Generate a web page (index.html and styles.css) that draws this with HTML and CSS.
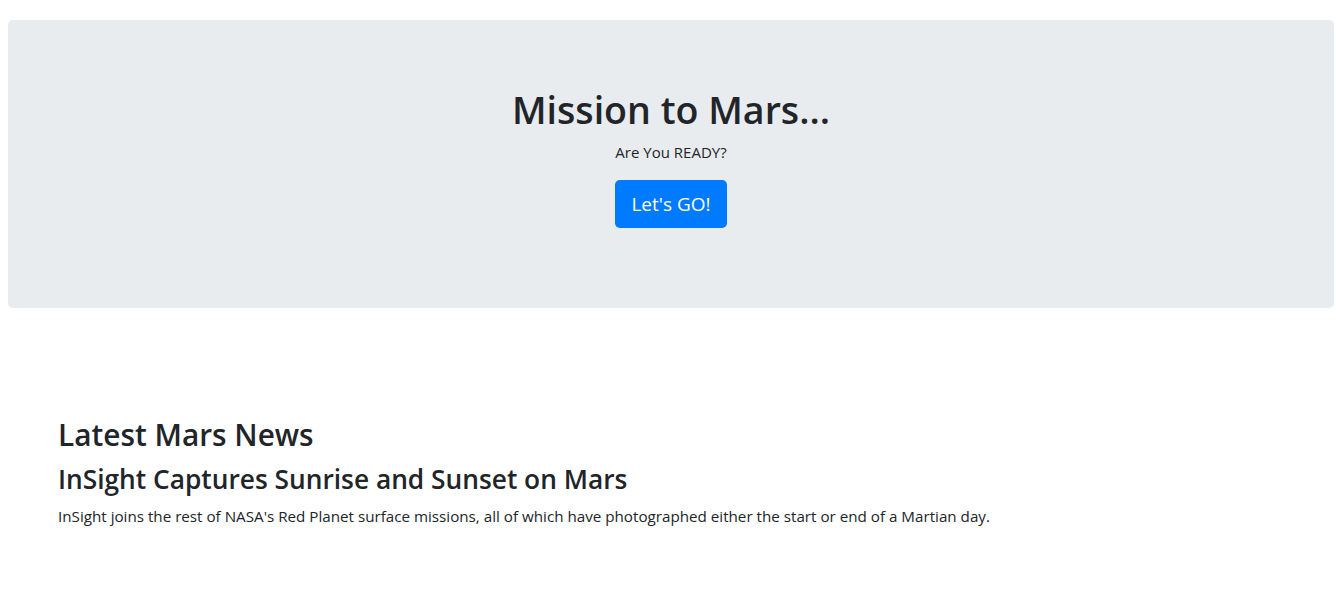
FILE: index.html
```html
<!DOCTYPE html>
<html lang="en">
<head>
<meta charset="utf-8">
<title>Mission to Mars</title>
<link rel="stylesheet" href="styles.css">
</head>
<body>
<div class="page">
  <div class="jumbotron">
    <h1 class="title">Mission to Mars...</h1>
    <p class="sub">Are You READY?</p>
    <p class="cta"><a class="btn" href="#">Let's GO!</a></p>
  </div>
  <section class="news">
    <h2 class="news-heading">Latest Mars News</h2>
    <h3 class="news-title">InSight Captures Sunrise and Sunset on Mars</h3>
    <p class="news-text">InSight joins the rest of NASA's Red Planet surface missions, all of which have photographed either the start or end of a Martian day.</p>
  </section>
</div>
</body>
</html>
```

FILE: styles.css
```css
html, body {
  margin: 0;
  padding: 0;
  background: #fff;
}
body {
  font-family: "Open Sans", "Noto Sans", "Liberation Sans", sans-serif;
  font-size: 16px;
  line-height: 1.5;
  color: #212529;
}
.page {
  padding: 20px 2px 0 8px;
}
.jumbotron {
  background: #e9ecef;
  border-radius: 4.8px;
  padding: 64px 32px;
  text-align: center;
}
.title {
  margin: 0 0 6px;
  padding-top: 2px;
  font-size: 37.6px;
  font-weight: 600;
  line-height: 48px;
}
.sub {
  margin: 0 0 16px;
  font-size: 15px;
  line-height: 24px;
}
.cta {
  margin: 0 0 16px;
  line-height: 0;
}
.btn {
  display: inline-block;
  background: #007bff;
  color: #fff;
  text-decoration: none;
  font-size: 19px;
  line-height: 30px;
  padding: 9px 16px;
  border-radius: 4.8px;
}
.news {
  margin-top: 108px;
  padding-left: 50px;
}
.news-heading {
  margin: 0 0 8px;
  font-size: 29.8px;
  font-weight: 600;
  line-height: 38px;
}
.news-title {
  margin: 0 0 8px;
  font-size: 26.3px;
  font-weight: 600;
  line-height: 34px;
}
.news-text {
  margin: 0;
  font-size: 15.2px;
  line-height: 24px;
}
```
